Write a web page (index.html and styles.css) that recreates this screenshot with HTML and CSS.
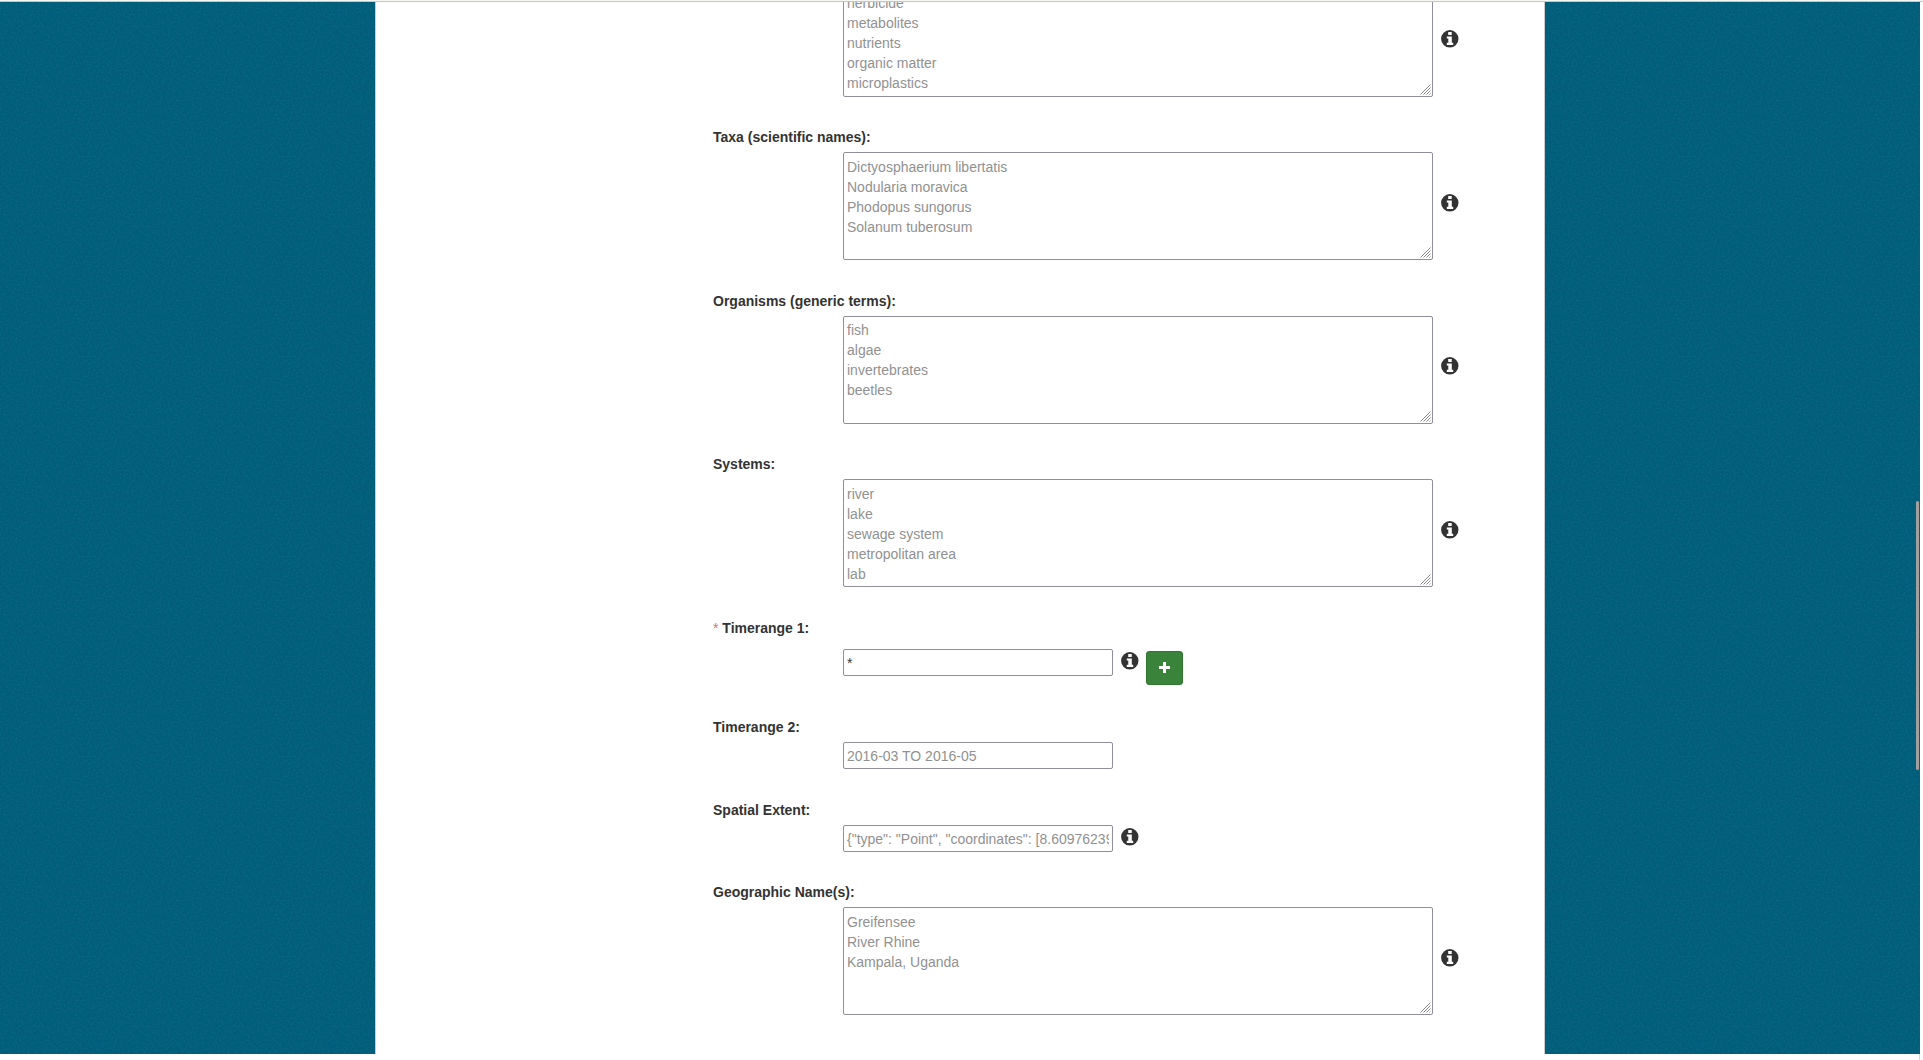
FILE: index.html
```
<!DOCTYPE html>
<html lang="en">
<head>
<meta charset="utf-8">
<title>Dataset form</title>
<link rel="stylesheet" href="styles.css">
</head>
<body>
<svg class="defs" width="0" height="0">
  <symbol id="info" viewBox="0 0 18 18">
    <circle cx="8.8" cy="8.8" r="8.7" fill="#333"/>
    <path fill="#fff" d="M7.2 2h3.5v3.1H7.2zM5.8 6.4h5v6.3h1.4v2.2H5.8v-2.2h1.5V8.6H5.8z"/>
  </symbol>
  <symbol id="grip" viewBox="0 0 11 11">
    <path fill="none" stroke="#888" stroke-width="1" d="M.5 10.5l10-10M3.5 10.5l7-7M6.5 10.5l4-4M9.5 10.5l1-1"/>
  </symbol>
</svg>
<div class="toolbar-edge"></div>
<main class="viewport">
  <form class="panel">
    <section class="field first">
      <div class="row"><div class="area"><p>herbicide
metabolites
nutrients
organic matter
microplastics</p><svg class="grip"><use href="#grip"/></svg></div><svg class="info"><use href="#info"/></svg></div>
    </section>
    <section class="field">
      <label>Taxa (scientific names):</label>
      <div class="row"><div class="area"><p>Dictyosphaerium libertatis
Nodularia moravica
Phodopus sungorus
Solanum tuberosum</p><svg class="grip"><use href="#grip"/></svg></div><svg class="info"><use href="#info"/></svg></div>
    </section>
    <section class="field organisms">
      <label>Organisms (generic terms):</label>
      <div class="row"><div class="area"><p>fish
algae
invertebrates
beetles</p><svg class="grip"><use href="#grip"/></svg></div><svg class="info"><use href="#info"/></svg></div>
    </section>
    <section class="field systems">
      <label>Systems:</label>
      <div class="row"><div class="area"><p>river
lake
sewage system
metropolitan area
lab</p><svg class="grip"><use href="#grip"/></svg></div><svg class="info"><use href="#info"/></svg></div>
    </section>
    <section class="field time-one">
      <label><span class="required">*</span> Timerange 1:</label>
      <div class="row"><input class="text" type="text" value="*"><svg class="info"><use href="#info"/></svg><button class="add" type="button" aria-label="Add"><svg width="11" height="11" viewBox="0 0 11 11"><path fill="#fff" d="M4 0h3v4h4v3H7v4H4V7H0V4h4z"/></svg></button></div>
    </section>
    <section class="field time-two">
      <label>Timerange 2:</label>
      <div class="row"><input class="text" type="text" placeholder="2016-03 TO 2016-05"></div>
    </section>
    <section class="field spatial">
      <label>Spatial Extent:</label>
      <div class="row"><input class="text" type="text" placeholder='{"type": "Point", "coordinates": [8.609762390, 47.35]}'><svg class="info"><use href="#info"/></svg></div>
    </section>
    <section class="field">
      <label>Geographic Name(s):</label>
      <div class="row"><div class="area"><p>Greifensee
River Rhine
Kampala, Uganda</p><svg class="grip"><use href="#grip"/></svg></div><svg class="info"><use href="#info"/></svg></div>
    </section>
  </form>
  <div class="scroll-thumb"></div>
</main>
<footer class="window-edge"></footer>
</body>
</html>
```
FILE: styles.css
```
* { box-sizing: border-box; }
body {
  margin: 0;
  height: 1060px;
  overflow: hidden;
  background: #fff;
  color: #333;
  font: 14px/20px "Liberation Sans", Arial, sans-serif;
}
.defs { position: absolute; }
.toolbar-edge {
  height: 2px;
  background: #f6f7f2;
  border-bottom: 1px solid #c5c8bb;
}
.viewport {
  position: relative;
  width: 1920px;
  height: 1052px;
  overflow: hidden;
  background: #005d7a url("data:image/svg+xml,%3Csvg xmlns='http://www.w3.org/2000/svg' width='100' height='100'%3E%3Cfilter id='n' x='0' y='0' width='100%25' height='100%25'%3E%3CfeTurbulence type='fractalNoise' baseFrequency='.5' numOctaves='2' stitchTiles='stitch'/%3E%3CfeColorMatrix values='0 0 0 0 .25 0 0 0 0 .6 0 0 0 0 .65 .9 0 0 0 -.36'/%3E%3C/filter%3E%3Crect width='100' height='100' filter='url(%23n)' opacity='.17'/%3E%3C/svg%3E");
}
.panel {
  width: 1170px;
  height: 1052px;
  margin-left: 375px;
  padding-left: 337px;
  overflow: hidden;
  background: #fff;
  border: solid #ccc;
  border-width: 0 1px;
}
.field { height: 163.6px; }
.first { height: 133px; margin-top: -13px; }
.systems { height: 164px; }
.time-one { height: 99px; }
.time-one .row { margin-top: 6px; }
.time-two { height: 83px; }
.spatial { height: 82px; }
label {
  display: block;
  height: 30px;
  padding-top: 5px;
  font-weight: bold;
}
.required { color: #d9706e; font-weight: normal; }
.row {
  display: flex;
  align-items: flex-start;
  margin-left: 130px;
}
.area {
  position: relative;
  width: 590px;
  height: 108px;
  padding: 4px 3px;
  overflow: hidden;
  border: 1px solid #8f8f9d;
  border-radius: 2px;
  color: #919191;
}
.area p { margin: 0; white-space: pre; }
.first p { margin-top: -1px; }
.organisms p { margin-top: -1px; }
.area .grip {
  position: absolute;
  right: 1px;
  bottom: 1px;
  width: 11px;
  height: 11px;
}
.info {
  width: 18px;
  height: 18px;
  margin: 42px 0 0 8px;
}
.first .info,
.organisms .info { margin-top: 41px; }
.text {
  width: 270px;
  height: 27px;
  padding: 2px 3px;
  border: 1px solid #8f8f9d;
  border-radius: 2px;
  background: #fff;
  color: #333;
  font: inherit;
}
.text::placeholder { color: #919191; opacity: 1; }
.text + .info { margin-top: 3px; }
.add {
  display: flex;
  align-items: center;
  justify-content: center;
  width: 37px;
  height: 34px;
  margin: 2px 0 0 7px;
  padding: 0 0 2px;
  border: 1px solid #2f762f;
  border-radius: 3px;
  background: #3a833a;
}
.scroll-thumb {
  position: absolute;
  top: 499px;
  right: 1px;
  width: 3px;
  height: 269px;
  border-radius: 2px;
  background: #a39e9f;
}
.window-edge {
  width: 1920px;
  height: 6px;
  border-right: 1px solid #d8d8d8;
}
```
